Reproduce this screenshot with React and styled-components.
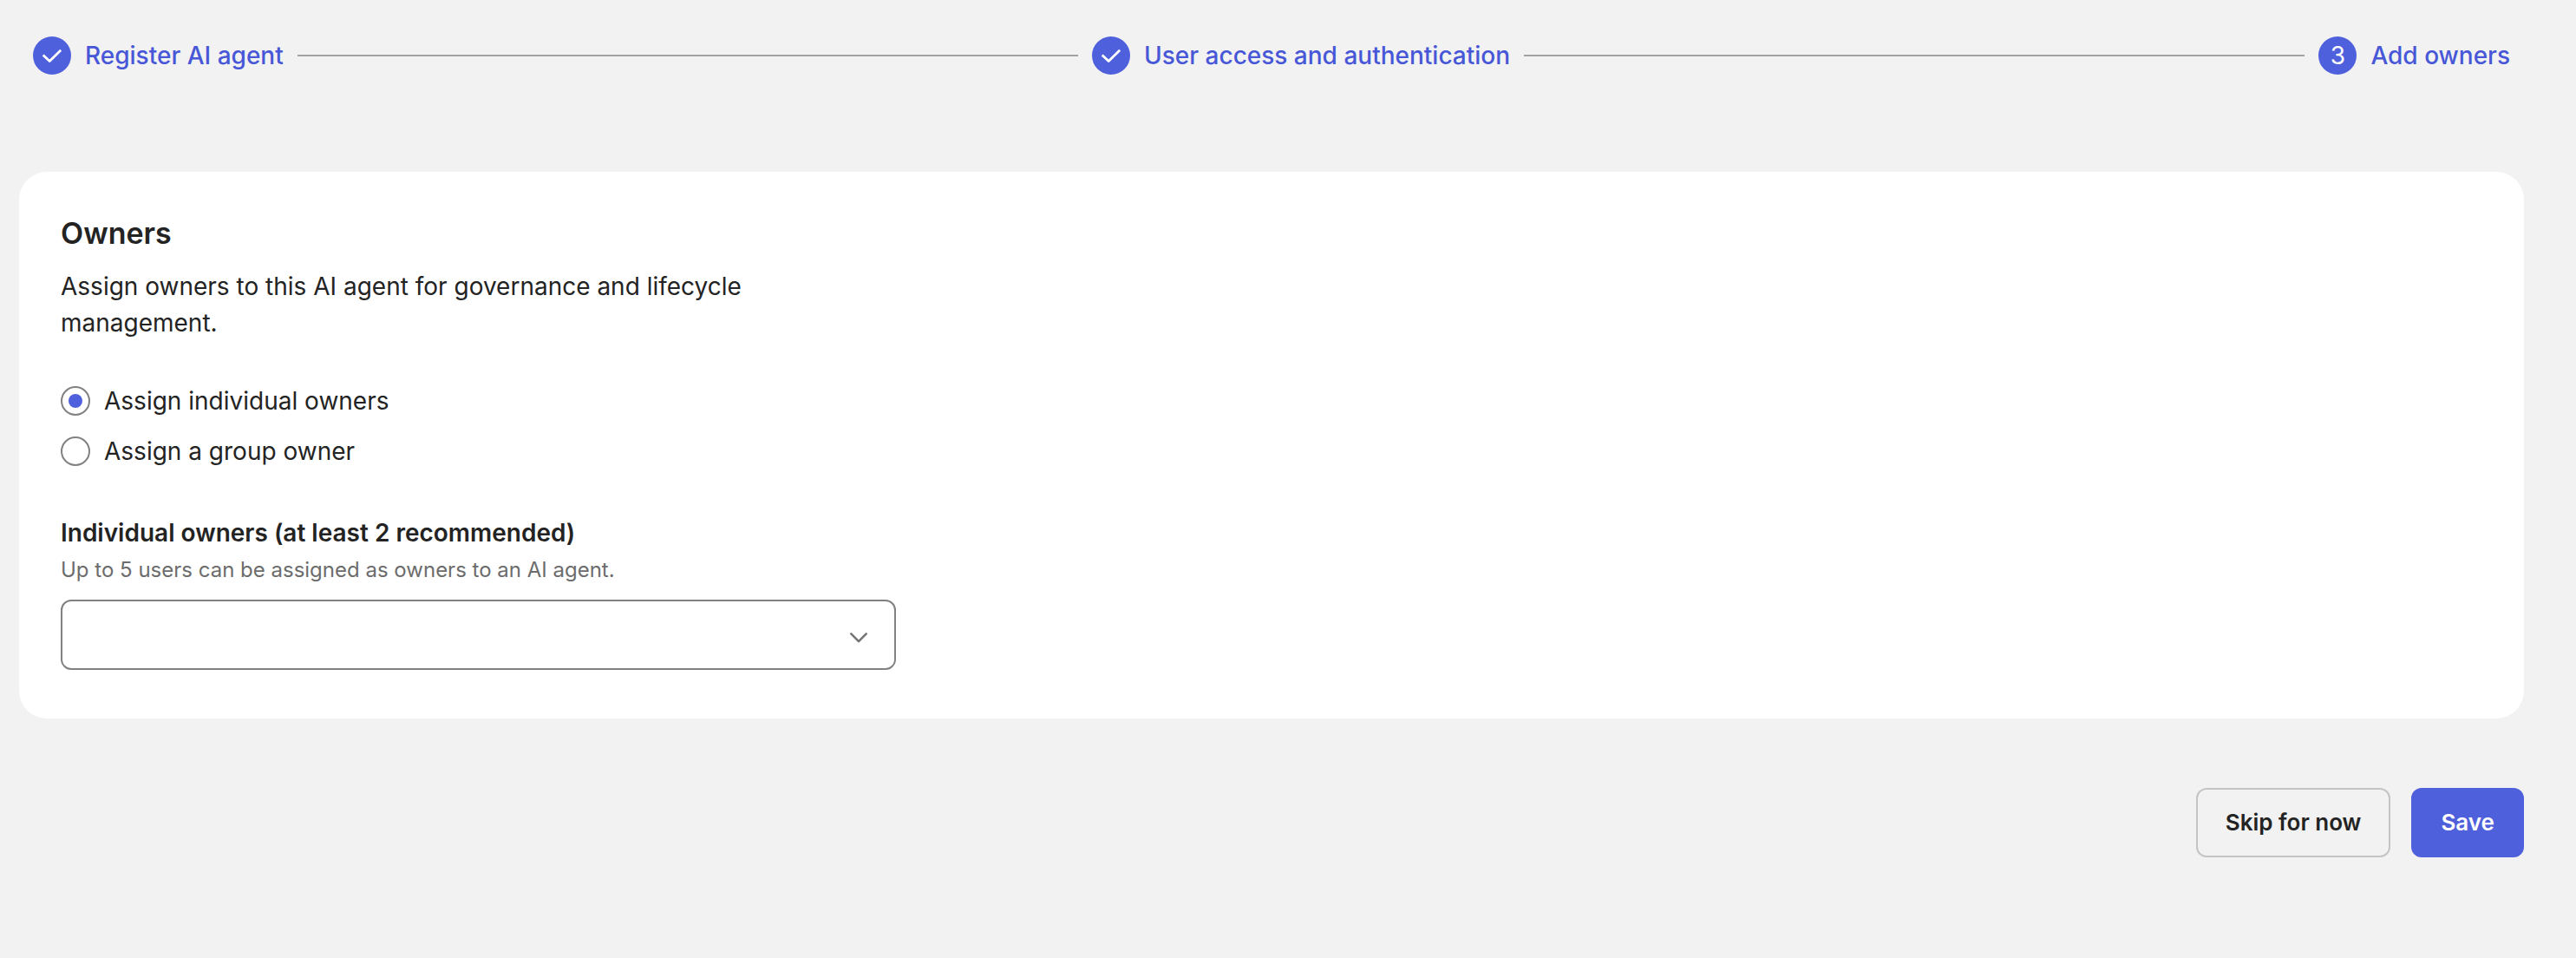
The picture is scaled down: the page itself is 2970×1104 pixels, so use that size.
import React, { useState } from 'react';
import styled, { createGlobalStyle } from 'styled-components';

const GlobalStyle = createGlobalStyle`
  * {
    box-sizing: border-box;
  }

  body {
    margin: 0;
    background: #f2f2f2;
    color: #232323;
    font-family: Inter, 'Liberation Sans', sans-serif;
    font-size: 28px;
    line-height: 42px;
  }
`;

const ScPage = styled.main`
  padding: 42px 60px 42px 22px;
`;

const ScStepper = styled.ol`
  display: flex;
  align-items: center;
  gap: 16px;
  margin: 0 0 112px;
  padding: 0 16px;
  list-style: none;
`;

const ScStep = styled.li`
  display: flex;
  align-items: center;
  gap: 16px;
  height: 44px;
  color: #4757d7;
  font-weight: 500;
  white-space: nowrap;

  &:not(:last-child) {
    flex: 1 1 auto;
  }

  &:not(:last-child)::after {
    content: '';
    flex: 1;
    height: 2px;
    background: #a0a1a0;
  }
`;

const ScStepBadge = styled.span`
  display: flex;
  align-items: center;
  justify-content: center;
  width: 44px;
  height: 44px;
  border-radius: 50%;
  background: #4f60dc;
  color: #fff;
  font-weight: 400;
`;

const ScCard = styled.section`
  padding: 48px 48px 56px;
  border-radius: 32px;
  background: #fff;
`;

const ScTitle = styled.h2`
  margin: 0 0 17px;
  font-size: 34px;
  font-weight: 600;
  line-height: 46px;
`;

const ScDescription = styled.p`
  max-width: 880px;
  margin: 0;
`;

const ScRadioGroup = styled.div`
  display: flex;
  flex-direction: column;
  align-items: flex-start;
  gap: 16px;
  margin: 48px 0 52px;
`;

const ScRadioLabel = styled.label`
  display: flex;
  align-items: center;
  gap: 16px;
  cursor: pointer;
`;

const ScRadio = styled.input`
  display: grid;
  place-content: center;
  width: 34px;
  height: 34px;
  margin: 0;
  border: 2px solid #818181;
  border-radius: 50%;
  background: #fff;
  appearance: none;
  cursor: pointer;

  &:checked::before {
    content: '';
    width: 16px;
    height: 16px;
    border-radius: 50%;
    background: #4f60dc;
  }
`;

const ScField = styled.div`
  display: flex;
  flex-direction: column;
  max-width: 963px;
`;

const ScFieldLabel = styled.label`
  margin-bottom: 4px;
  font-weight: 600;
`;

const ScHint = styled.span`
  margin-bottom: 16px;
  color: #6c6c6c;
  font-size: 24px;
  line-height: 36px;
`;

const ScSelectWrap = styled.div`
  position: relative;

  svg {
    position: absolute;
    top: 50%;
    right: 24px;
    transform: translateY(-50%);
    pointer-events: none;
  }
`;

const ScSelect = styled.select`
  display: block;
  width: 100%;
  height: 81px;
  padding: 0 76px 0 24px;
  border: 2px solid #818181;
  border-radius: 12px;
  background: #fff;
  color: inherit;
  font: inherit;
  appearance: none;
`;

const ScActions = styled.div`
  display: flex;
  justify-content: flex-end;
  gap: 24px;
  margin-top: 80px;
`;

const ScButton = styled.button`
  height: 80px;
  padding: 0 32px;
  border: 2px solid ${({ $primary }) => ($primary ? '#4f60dc' : '#c4c4c4')};
  border-radius: 12px;
  background: ${({ $primary }) => ($primary ? '#4f60dc' : 'transparent')};
  color: ${({ $primary }) => ($primary ? '#fff' : '#232323')};
  font: inherit;
  font-size: 26px;
  font-weight: 600;
  cursor: pointer;
`;

const CheckIcon = () => (
  <svg width="24" height="24" viewBox="0 0 24 24" fill="none" stroke="#fff" strokeWidth="2.8" aria-hidden="true">
    <path d="M1.7 11.6 9.2 18.6 22.2 5.8" strokeLinejoin="round" />
  </svg>
);

const ChevronIcon = () => (
  <svg width="36" height="36" viewBox="0 0 36 36" fill="none" stroke="#757575" strokeWidth="2.6" aria-hidden="true">
    <path d="M8.3 16.4 17 25.1 25.7 16.4" strokeLinecap="round" strokeLinejoin="round" />
  </svg>
);

const steps = [
  { label: 'Register AI agent', done: true },
  { label: 'User access and authentication', done: true },
  { label: 'Add owners', done: false },
];

const ownerTypes = [
  { value: 'individual', label: 'Assign individual owners' },
  { value: 'group', label: 'Assign a group owner' },
];

const App = () => {
  const [ownerType, setOwnerType] = useState('individual');

  return (
    <>
      <GlobalStyle />
      <ScPage>
        <ScStepper>
          {steps.map((step, index) => (
            <ScStep key={step.label}>
              <ScStepBadge>{step.done ? <CheckIcon /> : index + 1}</ScStepBadge>
              {step.label}
            </ScStep>
          ))}
        </ScStepper>

        <ScCard>
          <ScTitle>Owners</ScTitle>
          <ScDescription>Assign owners to this AI agent for governance and lifecycle management.</ScDescription>

          <ScRadioGroup role="radiogroup">
            {ownerTypes.map(({ value, label }) => (
              <ScRadioLabel key={value} htmlFor={value}>
                <ScRadio
                  type="radio"
                  id={value}
                  name="ownerType"
                  checked={ownerType === value}
                  onChange={() => setOwnerType(value)}
                />
                {label}
              </ScRadioLabel>
            ))}
          </ScRadioGroup>

          <ScField>
            <ScFieldLabel htmlFor="owners">Individual owners (at least 2 recommended)</ScFieldLabel>
            <ScHint id="owners-hint">Up to 5 users can be assigned as owners to an AI agent.</ScHint>
            <ScSelectWrap>
              <ScSelect id="owners" aria-describedby="owners-hint" />
              <ChevronIcon />
            </ScSelectWrap>
          </ScField>
        </ScCard>

        <ScActions>
          <ScButton type="button">Skip for now</ScButton>
          <ScButton type="button" $primary>
            Save
          </ScButton>
        </ScActions>
      </ScPage>
    </>
  );
};

export default App;
